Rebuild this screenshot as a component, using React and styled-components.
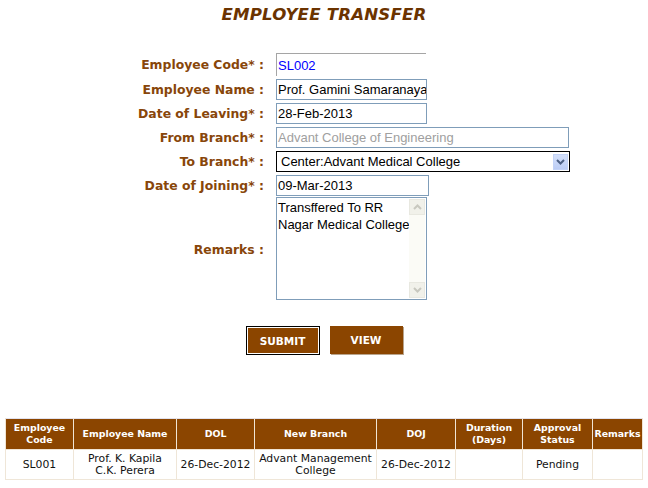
import React from "react";
import styled, { createGlobalStyle } from "styled-components";

const GlobalStyle = createGlobalStyle`
  body {
    margin: 0;
    background: #ffffff;
    font-family: "DejaVu Sans", Verdana, sans-serif;
  }
`;

const brown = "#8b4500";

const Page = styled.div`
  width: 648px;
  padding-top: 5px;
`;

const Title = styled.h2`
  margin: 0;
  text-align: center;
  font-size: 16.6px;
  font-weight: 700;
  font-style: italic;
  color: #6b3300;
  letter-spacing: 0.2px;
`;

const Form = styled.div`
  display: grid;
  grid-template-columns: 264px 1fr;
  column-gap: 12px;
  row-gap: 3px;
  margin-top: 29px;
  align-items: center;
`;

const Label = styled.label`
  text-align: right;
  font-size: 12.4px;
  font-weight: 700;
  color: #88460a;
  white-space: nowrap;
`;

const Field = styled.div`
  box-sizing: border-box;
  width: ${(p) => p.$w}px;
  height: 21px;
  padding: 0 1px;
  display: flex;
  align-items: center;
  font-family: "Liberation Sans", Arial, sans-serif;
  font-size: 13px;
  color: ${(p) => p.$color || "#000"};
  border: 1px solid #7f9db9;
  white-space: nowrap;
  overflow: hidden;
`;

const CodeField = styled(Field)`
  height: 23px;
  border: none;
  border-top: 1px solid #a5a5a5;
  border-left: 1px solid #a5a5a5;
`;

const SelectBox = styled(Field)`
  border: 1px solid #000;
  padding: 0 1px 0 4px;
  justify-content: space-between;
`;

const Arrow = styled.span`
  width: 15px;
  height: 16px;
  background: linear-gradient(#d4e0fb, #bccdf5);
  border: 1px solid #c3d3f7;
  box-sizing: border-box;
  display: flex;
  align-items: center;
  justify-content: center;
`;

const TextArea = styled.div`
  box-sizing: border-box;
  width: 151px;
  height: 103px;
  margin-top: -2px;
  border: 1px solid #7f9db9;
  display: flex;
  font-family: "Liberation Sans", Arial, sans-serif;
  font-size: 13px;
  line-height: 17px;
`;

const AreaText = styled.div`
  flex: 1;
  padding: 1px 1px;
  white-space: nowrap;
  overflow: hidden;
`;

const Scroll = styled.div`
  width: 16px;
  margin: 1px 1px 1px 0;
  background: #fbfbf6;
  display: flex;
  flex-direction: column;
  justify-content: space-between;
`;

const ScrollBtn = styled.div`
  height: 16px;
  border: 1px solid #e8e8e0;
  background: #f1f1ea;
  box-sizing: border-box;
  display: flex;
  align-items: center;
  justify-content: center;
`;

const RemarksLabel = styled(Label)`
  align-self: center;
`;

const Buttons = styled.div`
  display: flex;
  justify-content: center;
  gap: 10px;
  margin-top: 26px;
`;

const Button = styled.button`
  box-sizing: border-box;
  width: ${(p) => p.$w}px;
  height: ${(p) => (p.$focus ? 29 : 28)}px;
  background: ${brown};
  color: #fff;
  border: ${(p) => (p.$focus ? "1px solid #000" : "1px solid #8b4500")};
  box-shadow: ${(p) => (p.$focus ? "inset 0 0 0 1px #fff" : "1px 1px 0 #b9a48c")};
  font-family: "DejaVu Sans", Verdana, sans-serif;
  font-size: 10.5px;
  font-weight: 700;
  padding: 0;
`;

const Table = styled.table`
  margin: 63px 0 0 5px;
  width: 637px;
  table-layout: fixed;
  border-collapse: collapse;
  border: 1px solid #e2e2ee;
  font-family: "DejaVu Sans", Verdana, sans-serif;
  font-size: 10.8px;
`;

const Th = styled.th`
  background: ${brown};
  color: #fff;
  font-weight: 700;
  font-size: 9.4px;
  height: 30px;
  padding: 0 1px;
  border: 1px solid #f0e4d4;
  border-top: none;
  line-height: 12px;
`;

const Td = styled.td`
  text-align: center;
  height: 29px;
  padding: 0 1px;
  border: 1px solid #efe6d8;
  line-height: 12px;
  color: #111;
  white-space: nowrap;
`;

const Chevron = ({ up, color }) => (
  <svg width="9" height="6" viewBox="0 0 9 6">
    <path
      d={up ? "M1 5 L4.5 1.5 L8 5" : "M1 1 L4.5 4.5 L8 1"}
      fill="none"
      stroke={color}
      strokeWidth="2"
    />
  </svg>
);

const columns = [
  { w: 68, label: ["Employee", "Code"] },
  { w: 103, label: ["Employee Name"] },
  { w: 78, label: ["DOL"] },
  { w: 122, label: ["New Branch"] },
  { w: 79, label: ["DOJ"] },
  { w: 67, label: ["Duration", "(Days)"] },
  { w: 70, label: ["Approval", "Status"] },
  { w: 50, label: ["Remarks"] },
];

const rows = [
  {
    code: "SL001",
    name: ["Prof. K. Kapila", "C.K. Perera"],
    dol: "26-Dec-2012",
    branch: ["Advant Management", "College"],
    doj: "26-Dec-2012",
    duration: "",
    status: "Pending",
    remarks: "",
  },
];

const lines = (arr) =>
  arr.map((t, i) => (
    <React.Fragment key={i}>
      {i > 0 && <br />}
      {t}
    </React.Fragment>
  ));

export default function App() {
  return (
    <Page>
      <GlobalStyle />
      <Title>EMPLOYEE TRANSFER</Title>

      <Form>
        <Label>Employee Code* :</Label>
        <CodeField $w={150} $color="#0000ff">SL002</CodeField>

        <Label>Employee Name :</Label>
        <Field $w={151}>Prof. Gamini Samaranayake</Field>

        <Label>Date of Leaving* :</Label>
        <Field $w={151}>28-Feb-2013</Field>

        <Label>From Branch* :</Label>
        <Field $w={293} $color="#a0a0a0">Advant College of Engineering</Field>

        <Label>To Branch* :</Label>
        <SelectBox $w={294}>
          Center:Advant Medical College
          <Arrow>
            <Chevron color="#4d6185" />
          </Arrow>
        </SelectBox>

        <Label>Date of Joining* :</Label>
        <Field $w={153}>09-Mar-2013</Field>

        <RemarksLabel>Remarks :</RemarksLabel>
        <TextArea>
          <AreaText>
            Transffered To RR
            <br />
            Nagar Medical College
          </AreaText>
          <Scroll>
            <ScrollBtn>
              <Chevron up color="#c8c8bf" />
            </ScrollBtn>
            <ScrollBtn>
              <Chevron color="#c8c8bf" />
            </ScrollBtn>
          </Scroll>
        </TextArea>
      </Form>

      <Buttons>
        <Button $w={74} $focus>SUBMIT</Button>
        <Button $w={73}>VIEW</Button>
      </Buttons>

      <Table>
        <colgroup>
          {columns.map((c, i) => (
            <col key={i} style={{ width: c.w }} />
          ))}
        </colgroup>
        <thead>
          <tr>
            {columns.map((c, i) => (
              <Th key={i}>{lines(c.label)}</Th>
            ))}
          </tr>
        </thead>
        <tbody>
          {rows.map((r) => (
            <tr key={r.code}>
              <Td>{r.code}</Td>
              <Td>{lines(r.name)}</Td>
              <Td>{r.dol}</Td>
              <Td>{lines(r.branch)}</Td>
              <Td>{r.doj}</Td>
              <Td>{r.duration}</Td>
              <Td>{r.status}</Td>
              <Td>{r.remarks}</Td>
            </tr>
          ))}
        </tbody>
      </Table>
    </Page>
  );
}
